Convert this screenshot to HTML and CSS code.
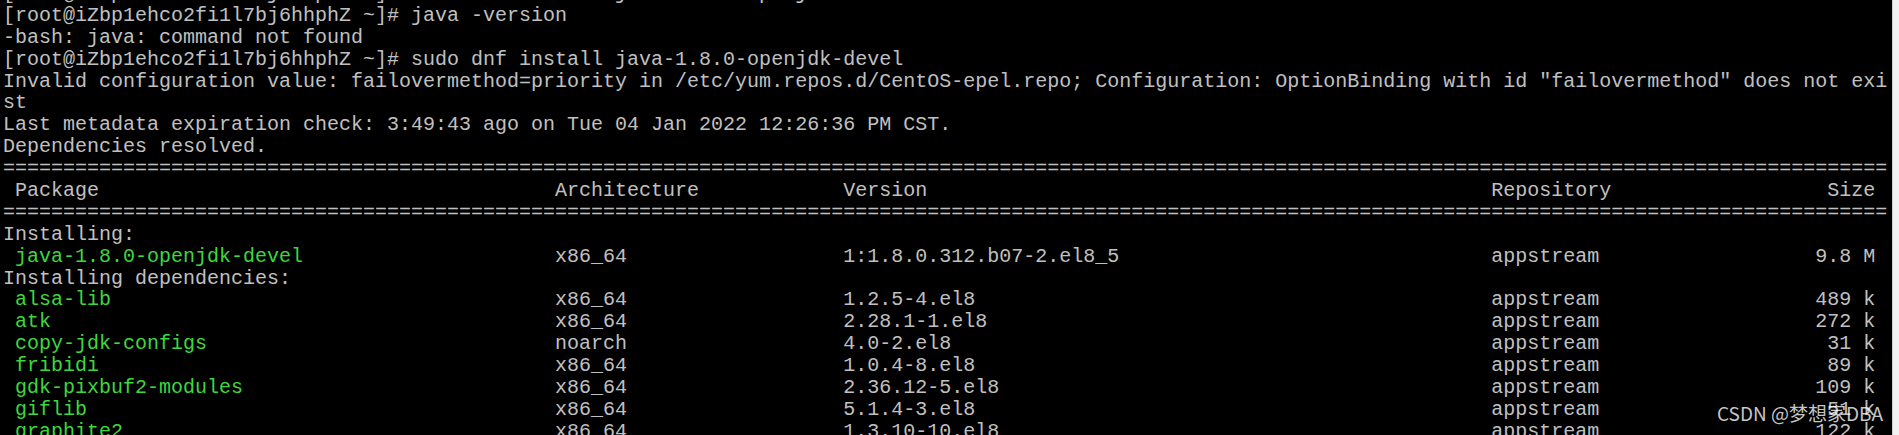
FILE: index.html
```html
<!DOCTYPE html>
<html lang="en">
<head>
<meta charset="utf-8">
<title>Terminal</title>
<link rel="stylesheet" href="styles.css">
</head>
<body>
<div class="screen">
  <div class="term">
    <div class="lines">
      <div class="ln">[root@iZbp1ehco2fi1l7bj6hhphZ ~]# sudo dnf install java-1.8.0-openjdk-devel</div>
      <div class="ln">[root@iZbp1ehco2fi1l7bj6hhphZ ~]# java -version</div>
      <div class="ln">-bash: java: command not found</div>
      <div class="ln">[root@iZbp1ehco2fi1l7bj6hhphZ ~]# sudo dnf install java-1.8.0-openjdk-devel</div>
      <div class="ln">Invalid configuration value: failovermethod=priority in /etc/yum.repos.d/CentOS-epel.repo; Configuration: OptionBinding with id "failovermethod" does not exi</div>
      <div class="ln">st</div>
      <div class="ln">Last metadata expiration check: 3:49:43 ago on Tue 04 Jan 2022 12:26:36 PM CST.</div>
      <div class="ln">Dependencies resolved.</div>
      <div class="ln">=============================================================================================================================================================</div>
      <div class="row"><span class="c-pkg">Package</span><span>Architecture</span><span>Version</span><span>Repository</span><span class="c-size">Size</span></div>
      <div class="ln">=============================================================================================================================================================</div>
      <div class="ln">Installing:</div>
      <div class="row"><span class="c-pkg pkg">java-1.8.0-openjdk-devel</span><span>x86_64</span><span>1:1.8.0.312.b07-2.el8_5</span><span>appstream</span><span class="c-size">9.8 M</span></div>
      <div class="ln">Installing dependencies:</div>
      <div class="row"><span class="c-pkg pkg">alsa-lib</span><span>x86_64</span><span>1.2.5-4.el8</span><span>appstream</span><span class="c-size">489 k</span></div>
      <div class="row"><span class="c-pkg pkg">atk</span><span>x86_64</span><span>2.28.1-1.el8</span><span>appstream</span><span class="c-size">272 k</span></div>
      <div class="row"><span class="c-pkg pkg">copy-jdk-configs</span><span>noarch</span><span>4.0-2.el8</span><span>appstream</span><span class="c-size">31 k</span></div>
      <div class="row"><span class="c-pkg pkg">fribidi</span><span>x86_64</span><span>1.0.4-8.el8</span><span>appstream</span><span class="c-size">89 k</span></div>
      <div class="row"><span class="c-pkg pkg">gdk-pixbuf2-modules</span><span>x86_64</span><span>2.36.12-5.el8</span><span>appstream</span><span class="c-size">109 k</span></div>
      <div class="row"><span class="c-pkg pkg">giflib</span><span>x86_64</span><span>5.1.4-3.el8</span><span>appstream</span><span class="c-size">51 k</span></div>
      <div class="row"><span class="c-pkg pkg">graphite2</span><span>x86_64</span><span>1.3.10-10.el8</span><span>appstream</span><span class="c-size">122 k</span></div>
    </div>
    <div class="watermark">CSDN @梦想家DBA</div>
  </div>
  <div class="edge"></div>
</div>
</body>
</html>
```

FILE: styles.css
```css
html, body {
  margin: 0;
  padding: 0;
  background: #000;
  overflow: hidden;
}

.screen {
  display: flex;
  width: 1899px;
  height: 435px;
  overflow: hidden;
}

.term {
  position: relative;
  flex: 1;
  background: #000;
  overflow: hidden;
}

.lines {
  display: flex;
  flex-direction: column;
  margin-top: -17px;
  padding-left: 3px;
  font-family: "Liberation Mono", "Courier New", monospace;
  font-size: 20px;
  line-height: 21.9px;
  color: #c0c0c0;
}

.ln {
  height: 21.9px;
  white-space: pre;
}

.row {
  display: grid;
  grid-template-columns: 46ch 24ch 54ch 1fr auto;
  width: 156ch;
  height: 21.9px;
}

.row span {
  white-space: pre;
}

.c-pkg {
  padding-left: 1ch;
}

.c-size {
  text-align: right;
}

.pkg {
  color: #3cd83c;
}

.watermark {
  position: absolute;
  left: 1717px;
  top: 400px;
  font-family: "Noto Sans CJK SC", "Noto Sans", sans-serif;
  font-size: 19px;
  line-height: 26px;
  color: rgba(255, 255, 255, 0.78);
  white-space: nowrap;
}

.edge {
  width: 6px;
  border-left: 1px solid #cfcfcf;
  background: #f2f2f2;
}
```
